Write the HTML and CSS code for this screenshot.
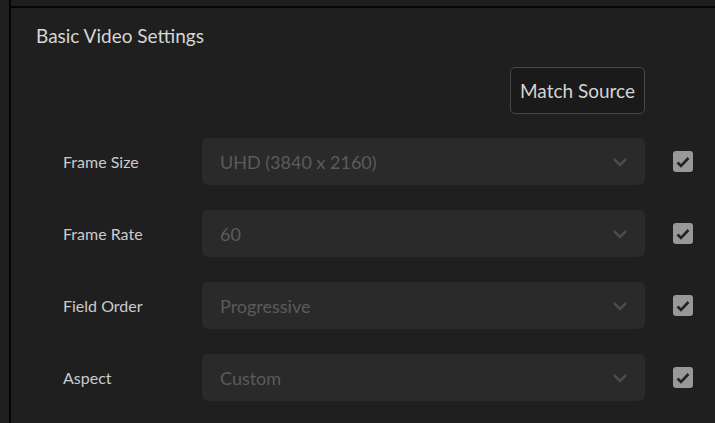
FILE: index.html
```html
<!DOCTYPE html>
<html>
<head>
<meta charset="utf-8">
<link rel="stylesheet" href="styles.css">
</head>
<body>
<div class="app">
  <div class="side"></div>
  <div class="main">
    <div class="topbar"></div>
    <div class="panel">
      <div class="title">Basic Video Settings</div>
      <div class="btnrow"><button class="btn">Match Source</button></div>
      <div class="rows">
        <div class="row">
          <div class="label">Frame Size</div>
          <div class="select"><span>UHD (3840 x 2160)</span><svg class="chev" width="16" height="10" viewBox="0 0 16 10"><path d="M2 2 L8 8 L14 2" fill="none" stroke="#4b4b4b" stroke-width="2.6"/></svg></div>
          <div class="check"><svg width="14" height="12" viewBox="0 0 14 12"><path d="M1.5 6.5 L5 10 L12.5 2" fill="none" stroke="#232323" stroke-width="2.6"/></svg></div>
        </div>
        <div class="row">
          <div class="label">Frame Rate</div>
          <div class="select"><span>60</span><svg class="chev" width="16" height="10" viewBox="0 0 16 10"><path d="M2 2 L8 8 L14 2" fill="none" stroke="#4b4b4b" stroke-width="2.6"/></svg></div>
          <div class="check"><svg width="14" height="12" viewBox="0 0 14 12"><path d="M1.5 6.5 L5 10 L12.5 2" fill="none" stroke="#232323" stroke-width="2.6"/></svg></div>
        </div>
        <div class="row">
          <div class="label">Field Order</div>
          <div class="select"><span>Progressive</span><svg class="chev" width="16" height="10" viewBox="0 0 16 10"><path d="M2 2 L8 8 L14 2" fill="none" stroke="#4b4b4b" stroke-width="2.6"/></svg></div>
          <div class="check"><svg width="14" height="12" viewBox="0 0 14 12"><path d="M1.5 6.5 L5 10 L12.5 2" fill="none" stroke="#232323" stroke-width="2.6"/></svg></div>
        </div>
        <div class="row">
          <div class="label">Aspect</div>
          <div class="select"><span>Custom</span><svg class="chev" width="16" height="10" viewBox="0 0 16 10"><path d="M2 2 L8 8 L14 2" fill="none" stroke="#4b4b4b" stroke-width="2.6"/></svg></div>
          <div class="check"><svg width="14" height="12" viewBox="0 0 14 12"><path d="M1.5 6.5 L5 10 L12.5 2" fill="none" stroke="#232323" stroke-width="2.6"/></svg></div>
        </div>
      </div>
    </div>
  </div>
</div>
</body>
</html>
```
FILE: styles.css
```css
html, body { margin: 0; padding: 0; background: #1e1e1e; }
body { width: 715px; height: 423px; overflow: hidden; font-family: "Lato", "Open Sans", sans-serif; }
.app { display: flex; height: 423px; }
.side { width: 9px; background: #1e1e1e; border-right: 2px solid #050505; flex: none; }
.main { flex: 1; display: flex; flex-direction: column; }
.topbar { height: 6px; background: #1e1e1e; border-bottom: 2px solid #050505; flex: none; }
.panel { background: #1f1f1f; flex: 1; padding: 0 0 0 25px; }
.title { color: #d6d6d6; font-size: 19px; margin-top: 16px; height: 24px; line-height: 24px; }
.btnrow { display: flex; justify-content: flex-end; padding-right: 70px; margin-top: 19px; }
.btn { width: 135px; height: 47px; background: #1a1a1a; border: 1px solid #474747; border-radius: 5px; color: #d4d4d4; font-family: inherit; font-size: 19px; padding: 0; }
.rows { display: flex; flex-direction: column; gap: 25px; margin-top: 24px; padding-left: 27px; }
.row { display: flex; align-items: center; height: 47px; }
.label { width: 139px; color: #cbcbcb; font-size: 16px; }
.select { width: 443px; height: 47px; background: #2a2a2a; border-radius: 6px; display: flex; align-items: center; justify-content: space-between; padding: 0 17px 0 18px; box-sizing: border-box; color: #5b5b5b; font-size: 18px; }
.chev { display: block; }
.check { margin-left: 28px; width: 20px; height: 21px; background: #989898; border-radius: 3px; display: flex; align-items: center; justify-content: center; }
.check svg { display: block; }
```
